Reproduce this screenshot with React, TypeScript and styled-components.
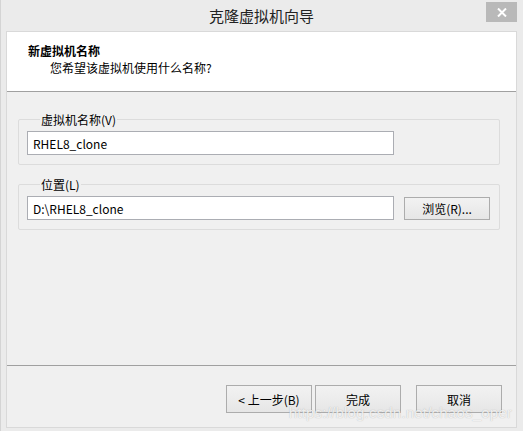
import React from "react";
import styled, { createGlobalStyle } from "styled-components";

const FONT = `"Segoe UI", "Noto Sans CJK SC", "Noto Sans", sans-serif`;

const GlobalStyle = createGlobalStyle`
  html, body {
    margin: 0;
    padding: 0;
    background: #ebebeb;
  }
  * {
    box-sizing: border-box;
  }
`;

const WindowEl = styled.div`
  position: relative;
  width: 523px;
  height: 431px;
  background: #ebebeb;
  border-left: 1px solid #d4d4d4;
  display: flex;
  flex-direction: column;
  padding: 0 6px 3px 5px;
  font-family: ${FONT};
  color: #000;
  overflow: hidden;
`;

const TitleBarEl = styled.div`
  height: 31px;
  display: grid;
  grid-template-columns: 1fr auto 1fr;
  align-items: start;
`;

const TitleEl = styled.div`
  grid-column: 2;
  font-size: 15px;
  line-height: 20px;
  padding-top: 6px;
  color: #222;
`;

const CloseEl = styled.div`
  grid-column: 3;
  justify-self: end;
  margin-top: 2px;
  width: 31px;
  height: 20px;
  background: #b9b9b9;
  display: flex;
  align-items: center;
  justify-content: center;
`;

const ClientEl = styled.div`
  flex: 1;
  background: #f0f0f0;
  border: 1px solid #d9d9d9;
  display: flex;
  flex-direction: column;
`;

const HeaderEl = styled.div`
  height: 60px;
  background: #fff;
  border-bottom: 1px solid #a0a0a0;
  padding: 10px 0 0 21px;
  font-size: 12px;
  line-height: 17px;
`;

const HeaderTitleEl = styled.div`
  font-weight: bold;
`;

const HeaderSubEl = styled.div`
  padding-left: 22px;
`;

const BodyEl = styled.div`
  flex: 1;
  padding: 19px 16px 0 11px;
  display: flex;
  flex-direction: column;
  gap: 11px;
`;

const GroupEl = styled.fieldset`
  margin: 0;
  min-inline-size: 0;
  border: 1px solid #dcdcdc;
  border-radius: 2px;
  padding: 3px 8px 9px 8px;
`;

const LegendEl = styled.legend`
  font-size: 12px;
  line-height: 17px;
  padding: 0 1px;
  margin-left: 13px;
`;

const FieldRowEl = styled.div`
  display: flex;
  align-items: center;
  gap: 10px;
`;

const InputEl = styled.input`
  width: 367px;
  height: 24px;
  border: 1px solid #abadb3;
  background: #fff;
  padding: 0 5px;
  font-family: ${FONT};
  font-size: 12px;
  color: #000;
  outline: none;
`;

const ButtonEl = styled.button<{ tall?: boolean }>`
  width: 86px;
  height: ${(p) => (p.tall ? 28 : 23)}px;
  border: 1px solid #acacac;
  background: linear-gradient(#f2f2f2, #e6e6e6);
  font-family: ${FONT};
  font-size: 12px;
  color: #000;
  padding: 0;
  border-radius: 0;
`;

const FooterEl = styled.div`
  border-top: 1px solid #a0a0a0;
  height: 62px;
  padding: 19px 14px 0 0;
  display: flex;
  justify-content: flex-end;
  align-items: flex-start;
  gap: 15px;
`;

const ButtonGroupEl = styled.div`
  display: flex;
  gap: 3px;
`;

const WatermarkEl = styled.div`
  position: absolute;
  right: 11px;
  bottom: 10px;
  font-family: "Liberation Sans", Arial, sans-serif;
  font-size: 15px;
  color: rgba(255, 255, 255, 0.8);
  text-shadow: 0 0 1px rgba(120, 120, 120, 0.55);
  letter-spacing: 0.2px;
  pointer-events: none;
`;

export default function App() {
  return (
    <>
      <GlobalStyle />
      <WindowEl>
        <TitleBarEl>
          <TitleEl>克隆虚拟机向导</TitleEl>
          <CloseEl>
            <svg width="10" height="9" viewBox="0 0 10 9">
              <path d="M1 0.5 L9 8.5 M9 0.5 L1 8.5" stroke="#fff" strokeWidth="2" />
            </svg>
          </CloseEl>
        </TitleBarEl>
        <ClientEl>
          <HeaderEl>
            <HeaderTitleEl>新虚拟机名称</HeaderTitleEl>
            <HeaderSubEl>您希望该虚拟机使用什么名称?</HeaderSubEl>
          </HeaderEl>
          <BodyEl>
            <GroupEl>
              <LegendEl>虚拟机名称(V)</LegendEl>
              <FieldRowEl>
                <InputEl defaultValue="RHEL8_clone" />
              </FieldRowEl>
            </GroupEl>
            <GroupEl>
              <LegendEl>位置(L)</LegendEl>
              <FieldRowEl>
                <InputEl defaultValue="D:\RHEL8_clone" />
                <ButtonEl>浏览(R)...</ButtonEl>
              </FieldRowEl>
            </GroupEl>
          </BodyEl>
          <FooterEl>
            <ButtonGroupEl>
              <ButtonEl tall>&lt; 上一步(B)</ButtonEl>
              <ButtonEl tall>完成</ButtonEl>
            </ButtonGroupEl>
            <ButtonEl tall>取消</ButtonEl>
          </FooterEl>
        </ClientEl>
        <WatermarkEl>https://blog.csdn.net/chaos_oper</WatermarkEl>
      </WindowEl>
    </>
  );
}
